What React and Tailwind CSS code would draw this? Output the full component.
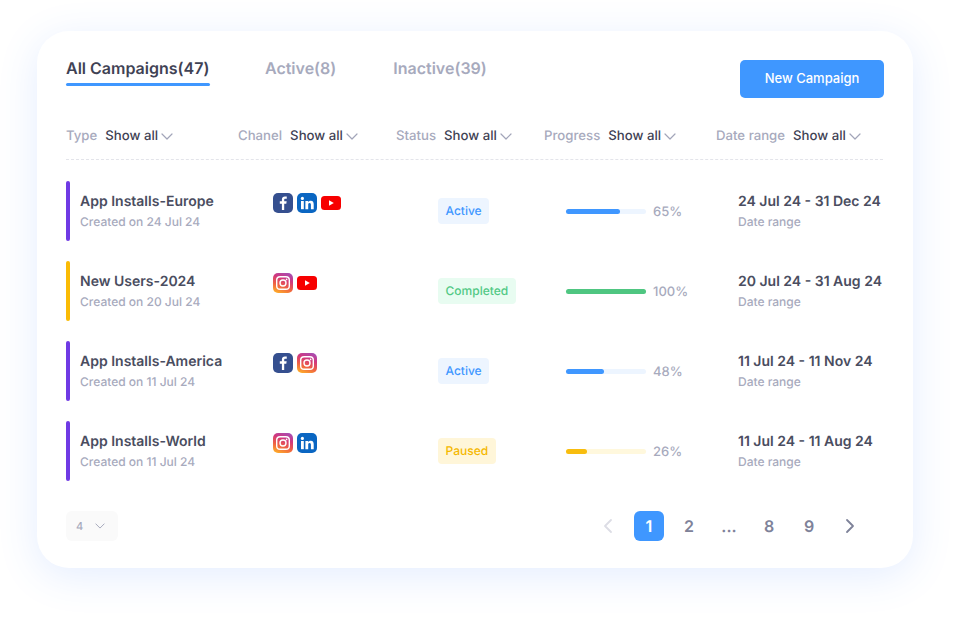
import React from "react";

const Chevron = ({ className = "w-[12px] h-[7px] text-[#a2a5b9]" }) => (
  <svg className={className} viewBox="0 0 12 7" fill="none" stroke="currentColor" strokeWidth="1.2" strokeLinecap="round" strokeLinejoin="round">
    <path d="M1 1l5 5 5-5" />
  </svg>
);

const Facebook = () => (
  <svg width="20" height="20" viewBox="0 0 20 20">
    <rect width="20" height="20" rx="5" fill="#354f8f" />
    <path d="M11.2 17v-6.2h2.1l.35-2.5H11.2V6.9c0-.75.25-1.2 1.25-1.2h1.3V3.5c-.3-.05-1-.1-1.8-.1-1.9 0-3.05 1.1-3.05 3.2v1.7H6.8v2.5h2.1V17z" fill="#fff" />
  </svg>
);

const Linkedin = () => (
  <svg width="20" height="20" viewBox="0 0 20 20">
    <rect width="20" height="20" rx="5" fill="#0a66c2" />
    <circle cx="5.4" cy="5.4" r="1.6" fill="#fff" />
    <rect x="4" y="8" width="2.8" height="8.2" fill="#fff" />
    <path d="M8.4 8h2.7v1.2c.5-.8 1.4-1.4 2.6-1.4 2.4 0 3 1.6 3 3.8v4.6h-2.8v-4.1c0-1-.1-2-1.3-2s-1.4.9-1.4 2v4.1H8.4z" fill="#fff" />
  </svg>
);

const Youtube = () => (
  <svg width="20" height="14" viewBox="0 0 20 14">
    <rect width="20" height="14" rx="3.5" fill="#f70000" />
    <path d="M8 4.2v5.6L12.8 7z" fill="#fff" />
  </svg>
);

const Instagram = ({ id }) => (
  <svg width="20" height="20" viewBox="0 0 20 20">
    <defs>
      <linearGradient id={id} x1="0.3" y1="1" x2="0.7" y2="0">
        <stop offset="0" stopColor="#fda72b" />
        <stop offset="0.35" stopColor="#ee5f45" />
        <stop offset="0.7" stopColor="#d0377f" />
        <stop offset="1" stopColor="#a94cb0" />
      </linearGradient>
    </defs>
    <rect width="20" height="20" rx="5" fill={`url(#${id})`} />
    <rect x="3.7" y="3.7" width="12.6" height="12.6" rx="3.4" fill="none" stroke="#fff" strokeWidth="1.4" />
    <circle cx="10" cy="10" r="3" fill="none" stroke="#fff" strokeWidth="1.4" />
    <circle cx="13.6" cy="6.4" r="0.85" fill="#fff" />
  </svg>
);

const icons = { f: Facebook, l: Linkedin, y: Youtube, i: Instagram };

const filters = [
  { label: "Type", w: "w-[172px]" },
  { label: "Chanel", w: "w-[158px]" },
  { label: "Status", w: "w-[148px]" },
  { label: "Progress", w: "w-[172px]" },
  { label: "Date range", w: "" },
];

const rows = [
  {
    name: "App Installs-Europe", created: "Created on 24 Jul 24", bar: "bg-[#6f3ae4]", ic: ["f", "l", "y"],
    status: "Active", badge: "bg-[#edf5ff] text-[#3f97ff]", fill: "bg-[#3f97ff]", track: "bg-[#edf5ff]", pct: 65, barW: "w-[54px]", date: "24 Jul 24 - 31 Dec 24",
  },
  {
    name: "New Users-2024", created: "Created on 20 Jul 24", bar: "bg-[#fabb05]", ic: ["i", "y"],
    status: "Completed", badge: "bg-[#e8fcf1] text-[#52c985]", fill: "bg-[#4fc681]", track: "bg-[#e8fcf1]", pct: 100, barW: "w-[80px]", date: "20 Jul 24 - 31 Aug 24",
  },
  {
    name: "App Installs-America", created: "Created on 11 Jul 24", bar: "bg-[#6f3ae4]", ic: ["f", "i"],
    status: "Active", badge: "bg-[#edf5ff] text-[#3f97ff]", fill: "bg-[#3f97ff]", track: "bg-[#edf5ff]", pct: 48, barW: "w-[38px]", date: "11 Jul 24 - 11 Nov 24",
  },
  {
    name: "App Installs-World", created: "Created on 11 Jul 24", bar: "bg-[#6f3ae4]", ic: ["i", "l"],
    status: "Paused", badge: "bg-[#fff6d9] text-[#f5b800]", fill: "bg-[#f8bd0e]", track: "bg-[#fff8dd]", pct: 26, barW: "w-[21px]", date: "11 Jul 24 - 11 Aug 24",
  },
];

export default function App() {
  return (
    <div className="w-[958px] h-[619px] bg-white pt-[31px] pl-[37px] overflow-hidden [font-family:Inter,sans-serif] [text-rendering:geometricPrecision]">
      <div className="w-[876px] h-[537px] bg-white rounded-[32px] shadow-[0_8px_40px_rgba(63,130,255,0.14)] px-[29px]">
        <div className="flex justify-between items-start h-[67px] pt-[27px]">
          <div className="flex">
            <div className="mr-[55px] w-[144px]">
              <div className="text-[16px] leading-[20px] font-semibold text-[#3f4254]">All Campaigns(47)</div>
              <div className="h-[3px] bg-[#3f97ff] rounded-full mt-[5px]" />
            </div>
            <div className="mr-[57px] text-[16px] leading-[20px] font-semibold text-[#a7aabd]">Active(8)</div>
            <div className="text-[16px] leading-[20px] font-semibold text-[#a7aabd]">Inactive(39)</div>
          </div>
          <button className="w-[144px] h-[38px] mt-[2px] rounded-[5px] bg-[#3f97ff] text-white text-[13px] font-medium">New Campaign</button>
        </div>
        <div className="flex items-center h-[62px] pt-[17px] border-b border-dashed border-[#e3e4ea] w-[817px]">
          {filters.map((f) => (
            <div key={f.label} className={`flex items-center ${f.w}`}>
              <span className="text-[13.2px] font-medium text-[#a7aabd] mr-[8px]">{f.label}</span>
              <span className="text-[13.2px] font-medium text-[#3f4254] mr-[3px]">Show all</span>
              <Chevron />
            </div>
          ))}
        </div>
        <div className="flex flex-col gap-[20px] mt-[21px]">
          {rows.map((r, idx) => (
            <div key={r.name} className="flex h-[60px]">
              <div className={`w-[4px] h-[60px] rounded-[2px] ${r.bar}`} />
              <div className="w-[203px] pl-[10px] pt-[12px]">
                <div className="text-[14px] leading-[18px] font-semibold text-[#4a4d60]">{r.name}</div>
                <div className="text-[12px] leading-[16px] mt-[3px] font-medium text-[#a7aabd]">{r.created}</div>
              </div>
              <div className="w-[165px] flex gap-[4px] pt-[12px] items-start">
                {r.ic.map((k) => {
                  const I = icons[k];
                  return (
                    <div key={k} className="h-[20px] flex items-center">
                      <I id={`ig${idx}`} />
                    </div>
                  );
                })}
              </div>
              <div className="w-[128px] pt-[17px]">
                <span className={`inline-flex items-center h-[26px] px-[7.5px] rounded-[4px] text-[12px] font-medium -translate-y-px ${r.badge}`}>{r.status}</span>
              </div>
              <div className="w-[172px] flex items-center gap-[7px] pt-[1px] h-[60px]">
                <div className={`w-[80px] h-[5px] rounded-full ${r.track}`}>
                  <div className={`h-[5px] rounded-full ${r.fill} ${r.barW}`} />
                </div>
                <span className="text-[13px] font-medium text-[#a7aabd] mt-[2px]">{r.pct}%</span>
              </div>
              <div className="pt-[12px]">
                <div className="text-[14px] leading-[18px] font-semibold text-[#4a4d60] whitespace-nowrap">{r.date}</div>
                <div className="text-[12px] leading-[16px] mt-[3px] font-medium text-[#a7aabd]">Date range</div>
              </div>
            </div>
          ))}
        </div>
        <div className="flex justify-between items-center mt-[30px] h-[30px]">
          <div className="w-[52px] h-[30px] rounded-[6px] bg-[#fafafa] flex items-center justify-between pl-[10px] pr-[13px] text-[11px] font-medium text-[#a7aabd]">
            <span>4</span>
            <Chevron className="w-[10px] h-[6px] text-[#a7aabd]" />
          </div>
          <div className="flex items-center text-[16px] font-semibold text-[#7e8299] mr-[29px]">
            <svg className="w-[10px] h-[16px] mr-[21px] text-[#dcdde5]" viewBox="0 0 10 16" fill="none" stroke="currentColor" strokeWidth="1.8" strokeLinecap="round" strokeLinejoin="round">
              <path d="M8 2L2 8l6 6" />
            </svg>
            <div className="w-[30px] h-[30px] rounded-[6px] bg-[#3f97ff] text-white flex items-center justify-center">1</div>
            <div className="w-[10px]" />
            <div className="w-[30px] flex justify-center">2</div>
            <div className="w-[10px]" />
            <div className="w-[30px] flex justify-center">...</div>
            <div className="w-[10px]" />
            <div className="w-[30px] flex justify-center">8</div>
            <div className="w-[10px]" />
            <div className="w-[30px] flex justify-center">9</div>
            <svg className="w-[10px] h-[16px] ml-[21px] text-[#7e8299]" viewBox="0 0 10 16" fill="none" stroke="currentColor" strokeWidth="1.8" strokeLinecap="round" strokeLinejoin="round">
              <path d="M2 2l6 6-6 6" />
            </svg>
          </div>
        </div>
      </div>
    </div>
  );
}
